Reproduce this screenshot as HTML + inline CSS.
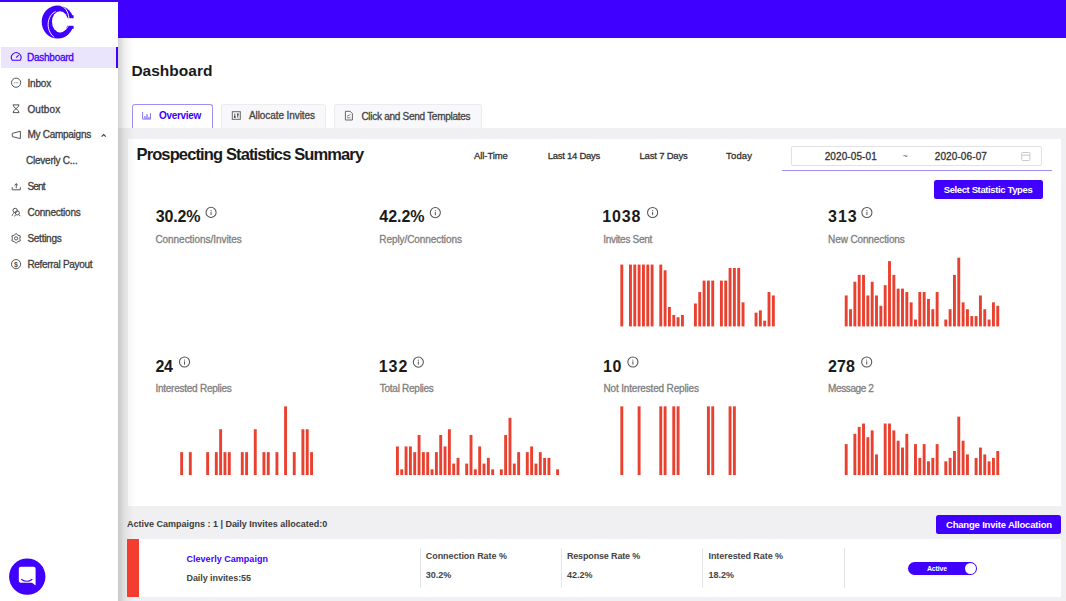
<!DOCTYPE html>
<html><head><meta charset="utf-8">
<style>
html,body{margin:0;padding:0;}
body{width:1066px;height:601px;overflow:hidden;position:relative;background:#fff;font-family:"Liberation Sans",sans-serif;}
.abs{position:absolute;}
.t{position:absolute;white-space:pre;line-height:1;font-family:"Liberation Sans",sans-serif;}
</style></head><body>
<!-- top bar -->
<div class="abs" style="left:0;top:0;width:1066px;height:37.5px;background:#4000ff"></div>
<!-- main grey panel -->
<div class="abs" style="left:117.5px;top:127.5px;width:948.5px;height:473.5px;background:#f0f0f2"></div>
<!-- sidebar shadow strip -->
<div class="abs" style="left:117.5px;top:37.5px;width:16px;height:563.5px;background:linear-gradient(to right,rgba(0,0,0,0.19) 0px,rgba(0,0,0,0.15) 1px,rgba(0,0,0,0.13) 3px,rgba(0,0,0,0.08) 5.5px,rgba(0,0,0,0.05) 8px,rgba(0,0,0,0.035) 10.5px,rgba(0,0,0,0) 16px)"></div>
<!-- sidebar -->
<div class="abs" style="left:0;top:2px;width:117.5px;height:599px;background:#fff"></div>
<div class="abs" style="left:1px;top:47px;width:116.5px;height:20.5px;background:#eae4fd"></div>
<div class="abs" style="left:115.5px;top:47px;width:2px;height:20.5px;background:#4000ff"></div>
<!-- tabs -->
<div class="abs" style="left:132px;top:104px;width:78.5px;height:22.5px;border:1px solid #9d8ff3;border-bottom:none;border-radius:3px 3px 0 0;background:#fff"></div>
<div class="abs" style="left:221.2px;top:104px;width:102.4px;height:22.5px;border:1px solid #ececef;border-bottom:none;border-radius:3px 3px 0 0;background:#f8f8fa"></div>
<div class="abs" style="left:334.4px;top:104px;width:146px;height:22.5px;border:1px solid #ececef;border-bottom:none;border-radius:3px 3px 0 0;background:#f8f8fa"></div>
<!-- stats card -->
<div class="abs" style="left:128px;top:139px;width:932.5px;height:366.5px;background:#fff"></div>
<div class="abs" style="left:128px;top:139px;width:9px;height:366.5px;background:linear-gradient(to right,rgba(0,0,0,0.035),rgba(0,0,0,0))"></div>
<!-- date box -->
<div class="abs" style="left:791.4px;top:146px;width:249px;height:17.6px;border:1px solid #e2e2e6;border-radius:2px;background:#fff"></div>
<div class="abs" style="left:781.8px;top:169.8px;width:270.2px;height:1.6px;background:#9e8ff2"></div>
<!-- select stat types button -->
<div class="abs" style="left:933.6px;top:179.7px;width:109.1px;height:19.2px;background:#4000ff;border-radius:2.5px"></div>
<!-- campaign card -->
<div class="abs" style="left:936px;top:515px;width:125px;height:18.6px;background:#4000ff;border-radius:2.5px"></div>
<div class="abs" style="left:127.1px;top:539px;width:933.9px;height:57.5px;background:#fff"></div>
<div class="abs" style="left:127.1px;top:539px;width:12.1px;height:57.8px;background:#f33d30"></div>
<div class="abs" style="left:420px;top:548.3px;width:1px;height:39.4px;background:#e4e4e6"></div>
<div class="abs" style="left:561px;top:548.3px;width:1px;height:39.4px;background:#e4e4e6"></div>
<div class="abs" style="left:702px;top:548.3px;width:1px;height:39.4px;background:#e4e4e6"></div>
<div class="abs" style="left:843.5px;top:548.3px;width:1px;height:39.4px;background:#e4e4e6"></div>
<!-- toggle -->
<div class="abs" style="left:907.8px;top:561.8px;width:68.9px;height:13.2px;background:#4000ff;border-radius:7px"></div>
<div class="abs" style="left:965.2px;top:563px;width:10.8px;height:10.8px;background:#fff;border-radius:50%"></div>
<!-- chat bubble (in icons) -->
<div class='t' style='left:27.00px;top:53px;font-size:10px;font-weight:400;-webkit-text-stroke:0.3px currentColor;color:#4000ff;letter-spacing:-0.250px;'>Dashboard</div>
<div class='t' style='left:27.40px;top:79px;font-size:10px;font-weight:400;-webkit-text-stroke:0.3px currentColor;color:#3d3d3d;letter-spacing:-0.150px;'>Inbox</div>
<div class='t' style='left:27.40px;top:105px;font-size:10px;font-weight:400;-webkit-text-stroke:0.3px currentColor;color:#3d3d3d;letter-spacing:0.120px;'>Outbox</div>
<div class='t' style='left:27.40px;top:130px;font-size:10px;font-weight:400;-webkit-text-stroke:0.3px currentColor;color:#3d3d3d;letter-spacing:-0.264px;'>My Campaigns</div>
<div class='t' style='left:26.00px;top:156px;font-size:10px;font-weight:400;-webkit-text-stroke:0.3px currentColor;color:#3d3d3d;letter-spacing:-0.233px;'>Cleverly C...</div>
<div class='t' style='left:27.40px;top:182px;font-size:10px;font-weight:400;-webkit-text-stroke:0.3px currentColor;color:#3d3d3d;letter-spacing:-0.800px;'>Sent</div>
<div class='t' style='left:27.40px;top:208px;font-size:10px;font-weight:400;-webkit-text-stroke:0.3px currentColor;color:#3d3d3d;letter-spacing:-0.220px;'>Connections</div>
<div class='t' style='left:27.40px;top:234px;font-size:10px;font-weight:400;-webkit-text-stroke:0.3px currentColor;color:#3d3d3d;letter-spacing:-0.257px;'>Settings</div>
<div class='t' style='left:27.40px;top:260px;font-size:10px;font-weight:400;-webkit-text-stroke:0.3px currentColor;color:#3d3d3d;letter-spacing:-0.314px;'>Referral Payout</div>
<div class='t' style='left:131.40px;top:63px;font-size:15.5px;font-weight:700;color:#1a1a1a;letter-spacing:0.012px;'>Dashboard</div>
<div class='t' style='left:159.00px;top:111px;font-size:10px;font-weight:700;color:#4000ff;letter-spacing:-0.329px;'>Overview</div>
<div class='t' style='left:249.00px;top:111px;font-size:10px;font-weight:400;-webkit-text-stroke:0.3px currentColor;color:#444;letter-spacing:-0.087px;'>Allocate Invites</div>
<div class='t' style='left:361.40px;top:112px;font-size:10px;font-weight:400;-webkit-text-stroke:0.3px currentColor;color:#444;letter-spacing:-0.274px;'>Click and Send Templates</div>
<div class='t' style='left:136.50px;top:146px;font-size:16.5px;font-weight:700;color:#1a1a1a;letter-spacing:-0.879px;'>Prospecting Statistics Summary</div>
<div class='t' style='left:474.10px;top:151px;font-size:9.5px;font-weight:400;-webkit-text-stroke:0.3px currentColor;color:#333;letter-spacing:-0.100px;'>All-Time</div>
<div class='t' style='left:547.80px;top:151px;font-size:9.5px;font-weight:400;-webkit-text-stroke:0.3px currentColor;color:#333;letter-spacing:-0.273px;'>Last 14 Days</div>
<div class='t' style='left:639.50px;top:151px;font-size:9.5px;font-weight:400;-webkit-text-stroke:0.3px currentColor;color:#333;letter-spacing:-0.190px;'>Last 7 Days</div>
<div class='t' style='left:726.00px;top:151px;font-size:9.5px;font-weight:400;-webkit-text-stroke:0.3px currentColor;color:#333;letter-spacing:0.175px;'>Today</div>
<div class='t' style='left:824.70px;top:152px;font-size:10px;font-weight:400;-webkit-text-stroke:0.3px currentColor;color:#333;letter-spacing:0.100px;'>2020-05-01</div>
<div class='t' style='left:902.40px;top:152px;font-size:9px;font-weight:400;color:#666;letter-spacing:0.000px;'>~</div>
<div class='t' style='left:934.80px;top:152px;font-size:10px;font-weight:400;-webkit-text-stroke:0.3px currentColor;color:#333;letter-spacing:0.100px;'>2020-06-07</div>
<div class='t' style='left:943.70px;top:185px;font-size:9.5px;font-weight:700;color:#fff;letter-spacing:-0.381px;'>Select Statistic Types</div>
<div class='t' style='left:946.00px;top:520px;font-size:9.5px;font-weight:700;color:#fff;letter-spacing:-0.191px;'>Change Invite Allocation</div>
<div class='t' style='left:926.90px;top:565px;font-size:7px;font-weight:700;color:#fff;letter-spacing:-0.160px;'>Active</div>
<div class='t' style='left:155.70px;top:209px;font-size:16px;font-weight:700;color:#1a1a1a;letter-spacing:-0.175px;'>30.2%</div>
<div class='t' style='left:155.40px;top:235px;font-size:10px;font-weight:400;-webkit-text-stroke:0.3px currentColor;color:#808080;letter-spacing:-0.044px;'>Connections/Invites</div>
<div class='t' style='left:379.30px;top:209px;font-size:16px;font-weight:700;color:#1a1a1a;letter-spacing:-0.050px;'>42.2%</div>
<div class='t' style='left:379.30px;top:235px;font-size:10px;font-weight:400;-webkit-text-stroke:0.3px currentColor;color:#808080;letter-spacing:-0.081px;'>Reply/Connections</div>
<div class='t' style='left:602.20px;top:209px;font-size:16px;font-weight:700;color:#1a1a1a;letter-spacing:0.833px;'>1038</div>
<div class='t' style='left:603.20px;top:235px;font-size:10px;font-weight:400;-webkit-text-stroke:0.3px currentColor;color:#808080;letter-spacing:-0.282px;'>Invites Sent</div>
<div class='t' style='left:828.10px;top:209px;font-size:16px;font-weight:700;color:#1a1a1a;letter-spacing:0.900px;'>313</div>
<div class='t' style='left:828.10px;top:235px;font-size:10px;font-weight:400;-webkit-text-stroke:0.3px currentColor;color:#808080;letter-spacing:-0.121px;'>New Connections</div>
<div class='t' style='left:155.40px;top:359px;font-size:16px;font-weight:700;color:#1a1a1a;letter-spacing:-0.300px;'>24</div>
<div class='t' style='left:155.40px;top:384px;font-size:10px;font-weight:400;-webkit-text-stroke:0.3px currentColor;color:#808080;letter-spacing:-0.247px;'>Interested Replies</div>
<div class='t' style='left:378.80px;top:359px;font-size:16px;font-weight:700;color:#1a1a1a;letter-spacing:0.900px;'>132</div>
<div class='t' style='left:379.80px;top:384px;font-size:10px;font-weight:400;-webkit-text-stroke:0.3px currentColor;color:#808080;letter-spacing:-0.267px;'>Total Replies</div>
<div class='t' style='left:603.00px;top:359px;font-size:16px;font-weight:700;color:#1a1a1a;letter-spacing:0.600px;'>10</div>
<div class='t' style='left:603.50px;top:384px;font-size:10px;font-weight:400;-webkit-text-stroke:0.3px currentColor;color:#808080;letter-spacing:-0.167px;'>Not Interested Replies</div>
<div class='t' style='left:828.10px;top:359px;font-size:16px;font-weight:700;color:#1a1a1a;letter-spacing:0.100px;'>278</div>
<div class='t' style='left:828.10px;top:384px;font-size:10px;font-weight:400;-webkit-text-stroke:0.3px currentColor;color:#808080;letter-spacing:-0.400px;'>Message 2</div>
<div class='t' style='left:127.10px;top:520px;font-size:9px;font-weight:700;color:#3a3a3a;letter-spacing:-0.011px;'>Active Campaigns : 1 | Daily Invites allocated:0</div>
<div class='t' style='left:186.50px;top:555px;font-size:9px;font-weight:700;color:#4000ff;letter-spacing:0.025px;'>Cleverly Campaign</div>
<div class='t' style='left:186.50px;top:574px;font-size:9px;font-weight:700;color:#444;letter-spacing:-0.067px;'>Daily invites:55</div>
<div class='t' style='left:425.80px;top:552px;font-size:9px;font-weight:700;color:#444;letter-spacing:-0.056px;'>Connection Rate %</div>
<div class='t' style='left:425.80px;top:571px;font-size:9px;font-weight:700;color:#444;letter-spacing:0.000px;'>30.2%</div>
<div class='t' style='left:566.90px;top:552px;font-size:9px;font-weight:700;color:#444;letter-spacing:-0.150px;'>Response Rate %</div>
<div class='t' style='left:566.90px;top:571px;font-size:9px;font-weight:700;color:#444;letter-spacing:0.000px;'>42.2%</div>
<div class='t' style='left:708.50px;top:552px;font-size:9px;font-weight:700;color:#444;letter-spacing:-0.062px;'>Interested Rate %</div>
<div class='t' style='left:708.50px;top:571px;font-size:9px;font-weight:700;color:#444;letter-spacing:0.000px;'>18.2%</div>
<svg class='abs' style='left:0;top:0' width='1066' height='601' viewBox='0 0 1066 601'><g fill='#e9402f'><rect x='620.35' y='264.57' width='2.9' height='61.83'/><rect x='629.01' y='264.57' width='2.9' height='61.83'/><rect x='633.34' y='264.57' width='2.9' height='61.83'/><rect x='637.67' y='264.57' width='2.9' height='61.83'/><rect x='642.00' y='264.57' width='2.9' height='61.83'/><rect x='646.33' y='264.57' width='2.9' height='61.83'/><rect x='650.66' y='264.57' width='2.9' height='61.83'/><rect x='659.32' y='264.57' width='2.9' height='61.83'/><rect x='663.65' y='270.29' width='2.9' height='56.11'/><rect x='667.98' y='306.94' width='2.9' height='19.46'/><rect x='672.31' y='314.95' width='2.9' height='11.45'/><rect x='676.64' y='317.24' width='2.9' height='9.16'/><rect x='680.97' y='314.95' width='2.9' height='11.45'/><rect x='693.96' y='303.50' width='2.9' height='22.90'/><rect x='698.29' y='292.05' width='2.9' height='34.35'/><rect x='702.62' y='280.60' width='2.9' height='45.80'/><rect x='706.95' y='280.60' width='2.9' height='45.80'/><rect x='711.28' y='280.60' width='2.9' height='45.80'/><rect x='719.94' y='280.60' width='2.9' height='45.80'/><rect x='724.27' y='280.60' width='2.9' height='45.80'/><rect x='728.60' y='268.00' width='2.9' height='58.40'/><rect x='732.93' y='268.00' width='2.9' height='58.40'/><rect x='737.26' y='268.00' width='2.9' height='58.40'/><rect x='741.59' y='302.35' width='2.9' height='24.05'/><rect x='754.58' y='312.66' width='2.9' height='13.74'/><rect x='758.91' y='310.37' width='2.9' height='16.03'/><rect x='763.24' y='320.67' width='2.9' height='5.72'/><rect x='767.57' y='292.05' width='2.9' height='34.35'/><rect x='771.90' y='295.48' width='2.9' height='30.91'/><rect x='844.75' y='295.48' width='2.9' height='30.91'/><rect x='849.08' y='309.22' width='2.9' height='17.18'/><rect x='853.41' y='281.75' width='2.9' height='44.66'/><rect x='857.74' y='274.88' width='2.9' height='51.52'/><rect x='862.07' y='274.88' width='2.9' height='51.52'/><rect x='866.40' y='295.48' width='2.9' height='30.91'/><rect x='870.73' y='281.75' width='2.9' height='44.66'/><rect x='875.06' y='295.48' width='2.9' height='30.91'/><rect x='879.39' y='305.79' width='2.9' height='20.61'/><rect x='883.72' y='285.18' width='2.9' height='41.22'/><rect x='888.05' y='261.13' width='2.9' height='65.27'/><rect x='892.38' y='274.88' width='2.9' height='51.52'/><rect x='896.71' y='288.61' width='2.9' height='37.79'/><rect x='901.04' y='288.61' width='2.9' height='37.79'/><rect x='905.37' y='292.05' width='2.9' height='34.35'/><rect x='909.70' y='302.35' width='2.9' height='24.05'/><rect x='914.03' y='319.53' width='2.9' height='6.87'/><rect x='918.36' y='292.05' width='2.9' height='34.35'/><rect x='922.69' y='292.05' width='2.9' height='34.35'/><rect x='927.02' y='298.92' width='2.9' height='27.48'/><rect x='931.35' y='309.22' width='2.9' height='17.18'/><rect x='935.68' y='292.05' width='2.9' height='34.35'/><rect x='944.34' y='319.53' width='2.9' height='6.87'/><rect x='948.67' y='309.22' width='2.9' height='17.18'/><rect x='953.00' y='274.88' width='2.9' height='51.52'/><rect x='957.33' y='257.70' width='2.9' height='68.70'/><rect x='961.66' y='302.35' width='2.9' height='24.05'/><rect x='965.99' y='309.22' width='2.9' height='17.18'/><rect x='970.32' y='316.09' width='2.9' height='10.30'/><rect x='974.65' y='316.09' width='2.9' height='10.30'/><rect x='978.98' y='295.48' width='2.9' height='30.91'/><rect x='983.31' y='309.22' width='2.9' height='17.18'/><rect x='987.64' y='319.53' width='2.9' height='6.87'/><rect x='991.97' y='302.35' width='2.9' height='24.05'/><rect x='996.30' y='305.79' width='2.9' height='20.61'/><rect x='180.21' y='452.15' width='2.9' height='22.90'/><rect x='188.87' y='452.15' width='2.9' height='22.90'/><rect x='206.19' y='452.15' width='2.9' height='22.90'/><rect x='214.85' y='452.15' width='2.9' height='22.90'/><rect x='219.18' y='429.25' width='2.9' height='45.80'/><rect x='223.51' y='452.15' width='2.9' height='22.90'/><rect x='227.84' y='452.15' width='2.9' height='22.90'/><rect x='240.83' y='452.15' width='2.9' height='22.90'/><rect x='245.16' y='452.15' width='2.9' height='22.90'/><rect x='253.82' y='429.25' width='2.9' height='45.80'/><rect x='262.48' y='452.15' width='2.9' height='22.90'/><rect x='266.81' y='452.15' width='2.9' height='22.90'/><rect x='275.47' y='452.15' width='2.9' height='22.90'/><rect x='284.13' y='406.35' width='2.9' height='68.70'/><rect x='292.79' y='452.15' width='2.9' height='22.90'/><rect x='301.45' y='429.25' width='2.9' height='45.80'/><rect x='305.78' y='429.25' width='2.9' height='45.80'/><rect x='310.11' y='452.15' width='2.9' height='22.90'/><rect x='395.95' y='446.43' width='2.9' height='28.63'/><rect x='400.28' y='469.32' width='2.9' height='5.73'/><rect x='404.61' y='446.43' width='2.9' height='28.63'/><rect x='408.94' y='446.43' width='2.9' height='28.63'/><rect x='413.27' y='452.15' width='2.9' height='22.90'/><rect x='417.60' y='434.98' width='2.9' height='40.08'/><rect x='421.93' y='452.15' width='2.9' height='22.90'/><rect x='426.26' y='452.15' width='2.9' height='22.90'/><rect x='430.59' y='469.32' width='2.9' height='5.73'/><rect x='434.92' y='452.15' width='2.9' height='22.90'/><rect x='439.25' y='434.98' width='2.9' height='40.08'/><rect x='443.58' y='446.43' width='2.9' height='28.63'/><rect x='447.91' y='429.25' width='2.9' height='45.80'/><rect x='452.24' y='463.60' width='2.9' height='11.45'/><rect x='456.57' y='457.88' width='2.9' height='17.18'/><rect x='465.23' y='463.60' width='2.9' height='11.45'/><rect x='469.56' y='434.98' width='2.9' height='40.08'/><rect x='473.89' y='469.32' width='2.9' height='5.73'/><rect x='478.22' y='446.43' width='2.9' height='28.63'/><rect x='482.55' y='463.60' width='2.9' height='11.45'/><rect x='486.88' y='457.88' width='2.9' height='17.18'/><rect x='491.21' y='469.32' width='2.9' height='5.73'/><rect x='499.87' y='469.32' width='2.9' height='5.73'/><rect x='504.20' y='434.98' width='2.9' height='40.08'/><rect x='508.53' y='417.80' width='2.9' height='57.25'/><rect x='512.86' y='463.60' width='2.9' height='11.45'/><rect x='517.19' y='452.15' width='2.9' height='22.90'/><rect x='525.85' y='452.15' width='2.9' height='22.90'/><rect x='530.18' y='446.43' width='2.9' height='28.63'/><rect x='534.51' y='463.60' width='2.9' height='11.45'/><rect x='538.84' y='452.15' width='2.9' height='22.90'/><rect x='543.17' y='457.88' width='2.9' height='17.18'/><rect x='547.50' y='457.88' width='2.9' height='17.18'/><rect x='556.16' y='469.32' width='2.9' height='5.73'/><rect x='620.35' y='406.35' width='2.9' height='68.70'/><rect x='637.67' y='406.35' width='2.9' height='68.70'/><rect x='659.32' y='406.35' width='2.9' height='68.70'/><rect x='663.65' y='406.35' width='2.9' height='68.70'/><rect x='672.31' y='406.35' width='2.9' height='68.70'/><rect x='676.64' y='406.35' width='2.9' height='68.70'/><rect x='706.95' y='406.35' width='2.9' height='68.70'/><rect x='711.28' y='406.35' width='2.9' height='68.70'/><rect x='728.60' y='406.35' width='2.9' height='68.70'/><rect x='732.93' y='406.35' width='2.9' height='68.70'/><rect x='844.75' y='444.13' width='2.9' height='30.91'/><rect x='853.41' y='433.83' width='2.9' height='41.22'/><rect x='857.74' y='426.96' width='2.9' height='48.09'/><rect x='862.07' y='423.53' width='2.9' height='51.52'/><rect x='866.40' y='437.26' width='2.9' height='37.79'/><rect x='870.73' y='430.39' width='2.9' height='44.66'/><rect x='875.06' y='454.44' width='2.9' height='20.61'/><rect x='883.72' y='423.53' width='2.9' height='51.52'/><rect x='888.05' y='423.53' width='2.9' height='51.52'/><rect x='892.38' y='430.39' width='2.9' height='44.66'/><rect x='896.71' y='440.70' width='2.9' height='34.35'/><rect x='901.04' y='447.57' width='2.9' height='27.48'/><rect x='905.37' y='433.83' width='2.9' height='41.22'/><rect x='914.03' y='444.13' width='2.9' height='30.91'/><rect x='918.36' y='457.88' width='2.9' height='17.18'/><rect x='922.69' y='444.13' width='2.9' height='30.91'/><rect x='927.02' y='461.31' width='2.9' height='13.74'/><rect x='931.35' y='457.88' width='2.9' height='17.18'/><rect x='935.68' y='444.13' width='2.9' height='30.91'/><rect x='944.34' y='461.31' width='2.9' height='13.74'/><rect x='948.67' y='457.88' width='2.9' height='17.18'/><rect x='953.00' y='451.00' width='2.9' height='24.05'/><rect x='957.33' y='416.66' width='2.9' height='58.40'/><rect x='961.66' y='440.70' width='2.9' height='34.35'/><rect x='965.99' y='454.44' width='2.9' height='20.61'/><rect x='974.65' y='457.88' width='2.9' height='17.18'/><rect x='978.98' y='447.57' width='2.9' height='27.48'/><rect x='983.31' y='454.44' width='2.9' height='20.61'/><rect x='987.64' y='461.31' width='2.9' height='13.74'/><rect x='991.97' y='457.88' width='2.9' height='17.18'/><rect x='996.30' y='451.00' width='2.9' height='24.05'/></g></svg><svg class="abs" style="left:0;top:0;pointer-events:none" width="1066" height="601" viewBox="0 0 1066 601">
 <!-- logo -->
 <g>
  <ellipse cx="57.7" cy="22" rx="16" ry="16.5" fill="#4000ff"/>
  <rect x="69" y="15.3" width="4.6" height="3" fill="#4000ff"/>
  <rect x="69" y="25.8" width="4.6" height="3" fill="#4000ff"/>
  <ellipse cx="60" cy="21.8" rx="8" ry="10.6" fill="#fff"/>
  <rect x="62" y="18.2" width="13" height="7.6" fill="#fff"/>
  <path d="M55.7 11.6 C47.5 14.5 44.5 29.5 54.2 37.4" fill="none" stroke="#fff" stroke-width="1"/>
  <path d="M60.3 5.6 C64.5 6.5 68.2 11 68.9 18" fill="none" stroke="#fff" stroke-width="1"/>
  <path d="M68.2 26.2 C66.8 29.5 63.5 31.5 59.9 31.9" fill="none" stroke="#fff" stroke-width="0.8"/>
 </g>
 <!-- sidebar icons -->
 <g fill="none" stroke="#4000ff" stroke-width="1.1">
  <path d="M12.3 60.3 A4.8 4.8 0 1 1 20.1 60.3 Z"/>
  <path d="M16.2 57.6 L18.6 55.2"/>
 </g>
 <g fill="none" stroke="#555" stroke-width="1">
  <circle cx="16.1" cy="82.7" r="4.6"/>
 </g>
 <g fill="#555"><circle cx="14.3" cy="82.8" r="0.5"/><circle cx="16.1" cy="82.8" r="0.5"/><circle cx="17.9" cy="82.8" r="0.5"/></g>
 <g fill="none" stroke="#555" stroke-width="1">
  <path d="M12.8 104.9 H19.3 M12.8 112.6 H19.3 M13.6 104.9 V106.5 L16 108.7 L13.6 110.9 V112.6 M18.5 104.9 V106.5 L16 108.7 L18.5 110.9 V112.6"/>
  <path d="M12.3 133.3 L20.4 131.3 V138.6 L12.3 136.6 Z"/>
  <path d="M12.2 187.2 V189.8 H20.3 V187.2 M16.25 188.2 V183.7 M14.6 185.3 L16.25 183.7 L17.9 185.3"/>
  <circle cx="15.2" cy="210.5" r="2.2"/>
  <circle cx="17.3" cy="212.9" r="2.1"/>
  <path d="M12.1 215.8 C12.4 214.3 13.2 213.4 14.2 213 M14.6 216.4 L15.3 215 M18.9 214.6 L20.4 216.2"/>
  <path d="M16.10 233.50 L17.95 235.20 L20.34 235.95 L19.80 238.40 L20.34 240.85 L17.95 241.60 L16.10 243.30 L14.25 241.60 L11.86 240.85 L12.40 238.40 L11.86 235.95 L14.25 235.20 Z" stroke-linejoin="round"/>
  <circle cx="16.1" cy="238.4" r="1.6"/>
  <circle cx="16.05" cy="264.15" r="4.6"/>
  <path d="M101.6 136.6 L103.7 134.6 L105.8 136.6" stroke="#444" stroke-width="1.2"/>
 </g>
 <text x="16.05" y="266.8" font-family="Liberation Sans" font-size="7" font-weight="700" fill="#555" text-anchor="middle">$</text>
 <!-- tab icons -->
 <g fill="none" stroke="#8a78f2" stroke-width="1">
  <path d="M142.6 112 V119.1 H150.8"/>
 </g>
 <g fill="#8a78f2"><rect x="144.3" y="116" width="1.3" height="3"/><rect x="146.3" y="114.2" width="1.3" height="4.8"/><rect x="148.3" y="116.8" width="1.3" height="2.2"/><rect x="150" y="113.2" width="1" height="5.8"/></g>
 <g fill="none" stroke="#666" stroke-width="1">
  <rect x="232.3" y="111.7" width="8" height="7.6"/>
  <path d="M234.8 113.5 V117.8 M237.8 113.5 V117.8"/>
  <path d="M345.4 111.3 H350.2 L352.4 113.5 V120 H345.4 Z"/>
  <path d="M347 116.2 L350.5 114.5 M347 117.8 H350.5" stroke-width="0.8"/>
 </g>
 <g fill="#555"><rect x="234" y="115.8" width="1.6" height="2.2"/><rect x="237" y="113.5" width="1.6" height="2"/></g>
 <!-- calendar -->
 <g fill="none" stroke="#c8c8cc" stroke-width="1">
  <rect x="1021.7" y="152.5" width="8.2" height="8" rx="1"/>
  <path d="M1021.7 155.2 H1029.9"/>
 </g>
 <!-- info icons -->
 <g fill="none" stroke="#555" stroke-width="1.05">
  <circle cx="211.05" cy="212.4" r="5.05"/>
  <circle cx="435.3" cy="212.6" r="5.05"/>
  <circle cx="652.6" cy="212.5" r="5.05"/>
  <circle cx="866.9" cy="212.5" r="5.05"/>
  <circle cx="184.5" cy="362.0" r="5.05"/>
  <circle cx="418.35" cy="362.1" r="5.05"/>
  <circle cx="632.9" cy="362.0" r="5.05"/>
  <circle cx="866.7" cy="362.0" r="5.05"/>
 </g>
 <g fill="#555"><rect x="210.55" y="211.80" width="1" height="3.2"/><rect x="210.55" y="210.00" width="1" height="1"/><rect x="434.80" y="212.00" width="1" height="3.2"/><rect x="434.80" y="210.20" width="1" height="1"/><rect x="652.10" y="211.90" width="1" height="3.2"/><rect x="652.10" y="210.10" width="1" height="1"/><rect x="866.40" y="211.90" width="1" height="3.2"/><rect x="866.40" y="210.10" width="1" height="1"/><rect x="184.00" y="361.40" width="1" height="3.2"/><rect x="184.00" y="359.60" width="1" height="1"/><rect x="417.85" y="361.50" width="1" height="3.2"/><rect x="417.85" y="359.70" width="1" height="1"/><rect x="632.40" y="361.40" width="1" height="3.2"/><rect x="632.40" y="359.60" width="1" height="1"/><rect x="866.20" y="361.40" width="1" height="3.2"/><rect x="866.20" y="359.60" width="1" height="1"/></g>
 <!-- chat -->
 <circle cx="27.25" cy="576.6" r="18.2" fill="#4000ff"/>
 <path d="M20.8 566.7 H33.6 A2 2 0 0 1 35.6 568.7 V585.6 L32 582.8 H20.8 A2 2 0 0 1 18.8 580.8 V568.7 A2 2 0 0 1 20.8 566.7 Z" fill="#fff"/>
 <path d="M21.3 579.2 Q26.8 583.3 32.3 579.2" fill="none" stroke="#4000ff" stroke-width="1.1"/>
</svg>

</body></html>
